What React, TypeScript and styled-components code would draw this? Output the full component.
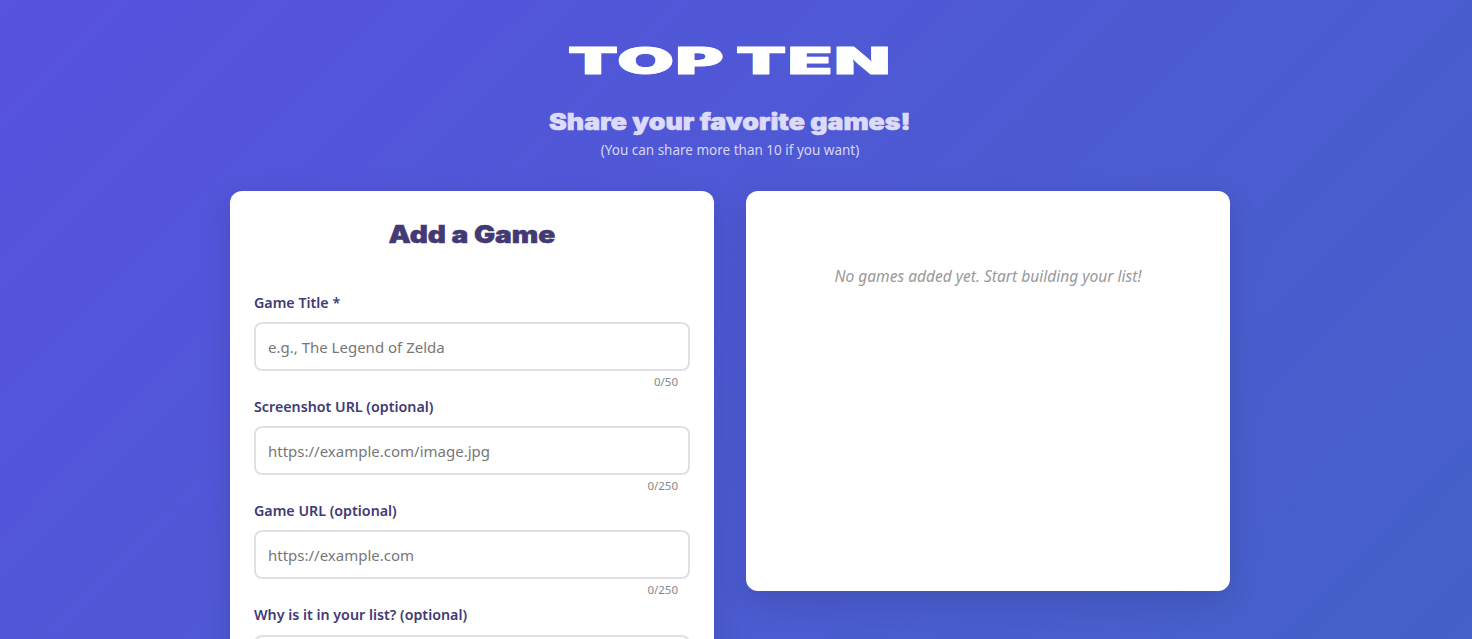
import styled, { createGlobalStyle } from "styled-components";

const GlobalStyle = createGlobalStyle`
  html, body {
    margin: 0;
    height: 100%;
    overflow: hidden;
  }

  body {
    font-family: "Noto Sans", "Open Sans", sans-serif;
  }

  * {
    box-sizing: border-box;
  }
`;

const Page = styled.div`
  height: 100vh;
  overflow: hidden;
  padding: 0 12px 0 0;
  background: linear-gradient(135deg, #5752df 0%, #4461c8 100%);
`;

const Header = styled.header`
  display: flex;
  flex-direction: column;
  align-items: center;
  padding-top: 39px;
  margin-bottom: 32px;
`;

const Title = styled.h1`
  margin: 0;
  height: 44px;
  font-family: Inter, sans-serif;
  font-size: 40px;
  line-height: 44px;
  font-weight: 900;
  letter-spacing: 1px;
  word-spacing: -3px;
  color: #fff;
  -webkit-text-stroke: 1px #fff;
  text-shadow: -0.6px 0 0 #67e8f9, 0.6px 0 0 #f5c6f5;
  transform: scale(1.82, 0.92);
`;

const Tagline = styled.h2`
  margin: 19px 0 0;
  height: 39px;
  font-family: Inter, sans-serif;
  font-size: 23px;
  line-height: 40px;
  font-weight: 900;
  color: #dcdcfa;
  -webkit-text-stroke: 0.6px #dcdcfa;
  transform: scaleX(1.16);
`;

const Note = styled.p`
  margin: 0;
  font-size: 13.5px;
  line-height: 18px;
  color: #d6d6f6;
`;

const Columns = styled.main`
  display: grid;
  grid-template-columns: 484px 484px;
  gap: 32px;
  justify-content: center;
  align-items: start;
`;

const Card = styled.section<{ $height?: number }>`
  background: #fff;
  border-radius: 12px;
  padding: 24px;
  box-shadow: 0 10px 30px rgba(0, 0, 0, 0.12);
  height: ${(props) => (props.$height ? `${props.$height}px` : "auto")};
`;

const CardTitle = styled.h3`
  margin: 0 0 38.8px;
  font-family: Inter, sans-serif;
  font-size: 24px;
  line-height: 39px;
  font-weight: 900;
  text-align: center;
  color: #423a75;
  -webkit-text-stroke: 0.5px #423a75;
  transform: scaleX(1.17);
`;

const Field = styled.div`
  display: flex;
  flex-direction: column;
`;

const Label = styled.label`
  font-size: 14.25px;
  line-height: 20px;
  font-weight: 600;
  color: #423a75;
  margin-bottom: 9.3px;
`;

const Input = styled.input`
  width: 100%;
  height: 49px;
  padding: 0 12px;
  border: 2px solid #e0e0e0;
  border-radius: 8px;
  outline: none;
  font-family: inherit;
  font-size: 15px;
  color: #333;

  &::placeholder {
    color: #777;
  }
`;

const TextArea = styled.textarea`
  width: 100%;
  height: 100px;
  padding: 12px;
  border: 2px solid #e0e0e0;
  border-radius: 8px;
  outline: none;
  resize: none;
  font-family: inherit;
  font-size: 15px;
`;

const Counter = styled.span`
  height: 25.9px;
  padding: 2px 12px 0 0;
  font-size: 11.5px;
  line-height: 18px;
  text-align: right;
  color: #888;
`;

const Empty = styled.p`
  margin: 0;
  padding-top: 47px;
  font-size: 15.55px;
  line-height: 28px;
  font-style: italic;
  text-align: center;
  color: #999;
`;

const fields = [
  { label: "Game Title *", placeholder: "e.g., The Legend of Zelda", max: 50 },
  { label: "Screenshot URL (optional)", placeholder: "https://example.com/image.jpg", max: 250 },
  { label: "Game URL (optional)", placeholder: "https://example.com", max: 250 },
];

export default function App() {
  return (
    <>
      <GlobalStyle />
      <Page>
        <Header>
          <Title>TOP TEN</Title>
          <Tagline>Share your favorite games!</Tagline>
          <Note>(You can share more than 10 if you want)</Note>
        </Header>

        <Columns>
          <Card>
            <CardTitle>Add a Game</CardTitle>
            {fields.map((field) => (
              <Field key={field.label}>
                <Label>{field.label}</Label>
                <Input placeholder={field.placeholder} readOnly />
                <Counter>0/{field.max}</Counter>
              </Field>
            ))}
            <Field>
              <Label>Why is it in your list? (optional)</Label>
              <TextArea readOnly />
            </Field>
          </Card>

          <Card $height={400}>
            <Empty>No games added yet. Start building your list!</Empty>
          </Card>
        </Columns>
      </Page>
    </>
  );
}
